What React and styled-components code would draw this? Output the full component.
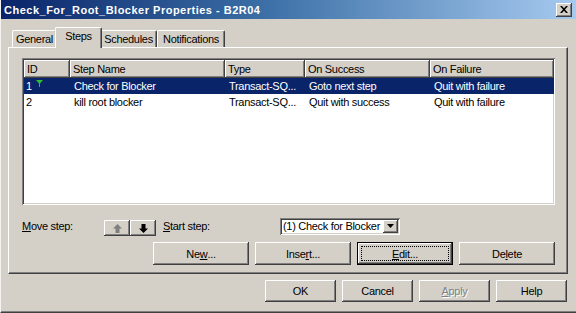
import React from 'react';
import styled, { createGlobalStyle, css } from 'styled-components';

const FACE = '#d4d0c8';

const GlobalStyle = createGlobalStyle`
  html, body {
    margin: 0;
    padding: 0;
    background: ${FACE};
  }
  body {
    font-family: "Liberation Sans", Arial, sans-serif;
    font-size: 11px;
    letter-spacing: -0.3px;
    color: #000;
  }
`;

const raised = css`
  box-shadow:
    inset -1px -1px #404040,
    inset 1px 1px #ffffff,
    inset -2px -2px #808080,
    inset 2px 2px ${FACE};
`;

const sunken = css`
  box-shadow:
    inset 1px 1px #808080,
    inset -1px -1px #ffffff,
    inset 2px 2px #404040,
    inset -2px -2px ${FACE};
`;

const columns = [
  { key: 'id', label: 'ID', width: 46 },
  { key: 'name', label: 'Step Name', width: 155 },
  { key: 'type', label: 'Type', width: 80 },
  { key: 'success', label: 'On Success', width: 125 },
  { key: 'failure', label: 'On Failure', width: 124 },
];

const steps = [
  { id: '1', start: true, name: 'Check for Blocker', type: 'Transact-SQ...', success: 'Goto next step', failure: 'Quit with failure' },
  { id: '2', name: 'kill root blocker', type: 'Transact-SQ...', success: 'Quit with success', failure: 'Quit with failure' },
];

const tabs = [
  { label: 'General', width: 45 },
  { label: 'Steps', width: 43, active: true },
  { label: 'Schedules', width: 57 },
  { label: 'Notifications', width: 68 },
];

const App = () => {
  return (
    <>
      <GlobalStyle />
      <Window>
        <TitleBar>
          <TitleText>Check_For_Root_Blocker Properties - B2R04</TitleText>
          <CloseButton>
            <svg width="8" height="7" viewBox="0 0 8 7">
              <path d="M0 0h2l2 2.2L6 0h2L5 3.5 8 7H6L4 4.8 2 7H0l3-3.5z" fill="#000" />
            </svg>
          </CloseButton>
        </TitleBar>

        <Content>
          <TabStrip>
            {tabs.map((t) => (
              <Tab key={t.label} $width={t.width} $active={t.active}>
                {t.label}
              </Tab>
            ))}
          </TabStrip>

          <Panel>
            <ListView>
              <HeaderRow>
                {columns.map((c) => (
                  <HeaderCell key={c.key} $width={c.width}>{c.label}</HeaderCell>
                ))}
                <HeaderFill />
              </HeaderRow>
              {steps.map((s, i) => (
                <Row key={s.id} $selected={i === 0}>
                  {columns.map((c) => (
                    <Cell key={c.key} $width={c.width}>
                      {s[c.key]}
                      {c.key === 'id' && s.start && (
                        <StartMark width="7" height="7" viewBox="0 0 7 7">
                          <path d="M0 0h7L3.5 4z" fill="#2fbf2f" />
                          <rect x="3" y="3" width="1" height="4" fill="#2fbf2f" />
                        </StartMark>
                      )}
                    </Cell>
                  ))}
                </Row>
              ))}
            </ListView>

            <MoveRow>
              <FieldLabel $width={82}><u>M</u>ove step:</FieldLabel>
              <ArrowButton>
                <svg width="9" height="9" viewBox="0 0 9 9">
                  <path d="M4.5 0L9 4.5H6.5V9h-4V4.5H0z" fill="#808080" />
                </svg>
              </ArrowButton>
              <ArrowButton>
                <svg width="9" height="9" viewBox="0 0 9 9">
                  <path d="M2.5 0h4v4.5H9L4.5 9 0 4.5h2.5z" fill="#000" />
                </svg>
              </ArrowButton>
              <FieldLabel $width={117} $gap={7}><u>S</u>tart step:</FieldLabel>
              <Combo>
                <ComboText>(1) Check for Blocker</ComboText>
                <ComboButton>
                  <svg width="7" height="4" viewBox="0 0 7 4">
                    <path d="M0 0h7L3.5 4z" fill="#000" />
                  </svg>
                </ComboButton>
              </Combo>
            </MoveRow>

            <ActionRow>
              <Button $width={96}>Ne<u>w</u>...</Button>
              <Button $width={96}>Inse<u>r</u>t...</Button>
              <Button $width={96} $focused>
                <FocusRing><u>E</u>dit...</FocusRing>
              </Button>
              <Button $width={96}>De<u>l</u>ete</Button>
            </ActionRow>
          </Panel>

          <DialogButtons>
            <Button $width={71} $height={22}>OK</Button>
            <Button $width={71} $height={22}>Cancel</Button>
            <Button $width={71} $height={22} $disabled><u>A</u>pply</Button>
            <Button $width={71} $height={22}>Help</Button>
          </DialogButtons>
        </Content>
      </Window>
    </>
  );
};

export default App;

const Window = styled.div`
  width: 576px;
  height: 313px;
  box-sizing: border-box;
  background: ${FACE};
  display: flex;
  flex-direction: column;
  border-left: 1px solid #f4f3ef;
  border-bottom: 1px solid #404040;
  box-shadow: inset 0 -1px #808080;
  overflow: hidden;
`;

const TitleBar = styled.div`
  height: 19px;
  flex: none;
  display: flex;
  align-items: center;
  justify-content: space-between;
  padding: 0 4px 0 3px;
  background: linear-gradient(to right, #0a246a 0%, #3a6ea5 45%, #a6caf0 100%);
`;

const TitleText = styled.span`
  color: #fff;
  font-weight: bold;
  font-size: 11px;
  white-space: nowrap;
  letter-spacing: 0.5px;
`;

const CloseButton = styled.div`
  width: 16px;
  height: 14px;
  background: ${FACE};
  display: flex;
  align-items: center;
  justify-content: center;
  ${raised};
`;

const Content = styled.div`
  display: flex;
  flex-direction: column;
  padding: 0 8px 0 7px;
`;

const TabStrip = styled.div`
  display: flex;
  align-items: flex-end;
  height: 20px;
  margin-top: 8px;
  padding-left: 4px;
  position: relative;
  z-index: 1;
`;

const Tab = styled.div`
  box-sizing: border-box;
  width: ${(p) => p.$width + (p.$active ? 4 : 0)}px;
  height: ${(p) => (p.$active ? 21 : 17)}px;
  margin: 0 ${(p) => (p.$active ? -2 : 0)}px ${(p) => (p.$active ? -1 : 0)}px;
  padding-top: 2px;
  display: flex;
  justify-content: center;
  background: ${FACE};
  border-top: 1px solid #fff;
  border-left: 1px solid #fff;
  border-right: 1px solid #404040;
  border-radius: 2px 2px 0 0;
  box-shadow: inset -1px 0 #808080;
  white-space: nowrap;
  line-height: 13px;
  position: relative;
  z-index: ${(p) => (p.$active ? 2 : 0)};
`;

const Panel = styled.div`
  box-sizing: border-box;
  width: 560px;
  height: 227px;
  display: flex;
  flex-direction: column;
  padding: 10px 0 0 13px;
  border-top: 1px solid #fff;
  border-left: 1px solid #fff;
  border-right: 1px solid #404040;
  border-bottom: 1px solid #404040;
  box-shadow: inset -1px -1px #808080;
`;

const ListView = styled.div`
  box-sizing: border-box;
  width: 533px;
  height: 147px;
  padding: 2px;
  background: #fff;
  ${sunken};
`;

const HeaderRow = styled.div`
  display: flex;
  height: 18px;
`;

const HeaderCell = styled.div`
  box-sizing: border-box;
  flex: none;
  width: ${(p) => p.$width}px;
  padding: 3px 0 0 3px;
  background: ${FACE};
  white-space: nowrap;
  overflow: hidden;
  ${raised};
`;

const HeaderFill = styled.div`
  flex: 1;
  background: ${FACE};
  ${raised};
`;

const Row = styled.div`
  display: flex;
  height: 16px;
  align-items: center;
  width: 530px;
  background: ${(p) => (p.$selected ? '#0a246a' : 'transparent')};
  color: ${(p) => (p.$selected ? '#fff' : '#000')};
`;

const Cell = styled.div`
  flex: none;
  width: ${(p) => p.$width}px;
  padding-left: 2px;
  box-sizing: border-box;
  white-space: nowrap;
  overflow: hidden;
  display: flex;
  align-items: flex-start;
  & + & {
    padding-left: 4px;
  }
`;

const StartMark = styled.svg`
  margin: 0 0 0 4px;
  flex: none;
`;

const MoveRow = styled.div`
  display: flex;
  align-items: center;
  height: 18px;
  margin-top: 12px;
`;

const FieldLabel = styled.span`
  flex: none;
  width: ${(p) => p.$width}px;
  margin-left: ${(p) => p.$gap || 0}px;
  white-space: nowrap;
  margin-top: -1px;
`;

const ArrowButton = styled.div`
  box-sizing: border-box;
  width: 26px;
  height: 16px;
  margin-top: 4px;
  display: flex;
  align-items: center;
  justify-content: center;
  background: ${FACE};
  ${raised};
`;

const Combo = styled.div`
  box-sizing: border-box;
  width: 120px;
  height: 17px;
  display: flex;
  align-items: center;
  padding: 2px;
  background: #fff;
  ${sunken};
`;

const ComboText = styled.span`
  flex: 1;
  padding-left: 1px;
  white-space: nowrap;
  overflow: hidden;
`;

const ComboButton = styled.div`
  box-sizing: border-box;
  width: 15px;
  height: 13px;
  display: flex;
  align-items: center;
  justify-content: center;
  background: ${FACE};
  ${raised};
`;

const ActionRow = styled.div`
  display: flex;
  gap: 6px;
  width: 533px;
  justify-content: flex-end;
  margin-top: 7px;
`;

const Button = styled.div`
  box-sizing: border-box;
  width: ${(p) => p.$width}px;
  height: ${(p) => p.$height || 23}px;
  display: flex;
  align-items: center;
  justify-content: center;
  background: ${FACE};
  color: ${(p) => (p.$disabled ? '#808080' : '#000')};
  text-shadow: ${(p) => (p.$disabled ? '1px 1px #fff' : 'none')};
  white-space: nowrap;
  ${(p) =>
    p.$focused
      ? css`
          border: 1px solid #000;
          padding: 3px;
          box-shadow:
            inset -1px -1px #404040,
            inset 1px 1px #ffffff,
            inset -2px -2px #808080;
        `
      : raised};
`;

const FocusRing = styled.span`
  flex: 1;
  align-self: stretch;
  display: flex;
  align-items: center;
  justify-content: center;
  outline: 1px dotted #000;
  outline-offset: -1px;
`;

const DialogButtons = styled.div`
  display: flex;
  gap: 6px;
  justify-content: flex-end;
  width: 560px;
  padding-right: 1px;
  box-sizing: border-box;
  margin-top: 6px;
`;
